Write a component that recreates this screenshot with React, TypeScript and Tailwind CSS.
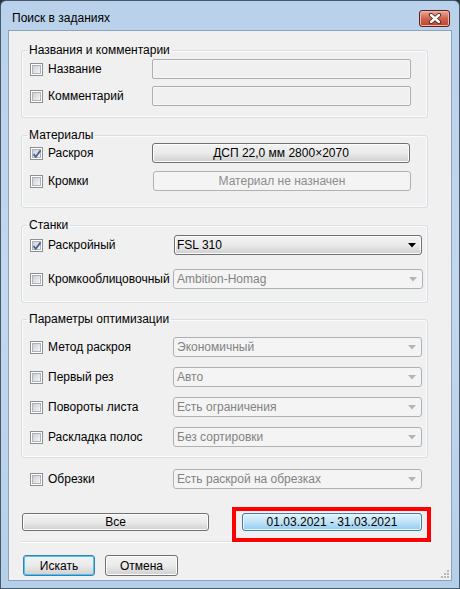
import React from 'react';

const font = { fontFamily: '"Liberation Sans", Arial, sans-serif' };

const CheckBox = ({ checked = false }: { checked?: boolean }) => (
    <div className="relative w-[13px] h-[13px] shrink-0 border border-[#8e8f8f] bg-white p-[1px]">
        <div className="w-full h-full border border-[#aeb3b9] bg-linear-to-br from-[#cbcfd5] to-[#f6f6f6]" />
        {checked && (
            <svg className="absolute left-[1px] top-[1px]" width="10" height="10" viewBox="0 0 10 10">
                <path d="M1.5 5.2 L3.8 7.8 L8.6 1.4" fill="none" stroke="#4a5f97" strokeWidth="1.8" strokeLinejoin="round" />
            </svg>
        )}
    </div>
);

const Label = ({ text, checked, width }: { text: string; checked?: boolean; width: string }) => (
    <div className={`flex items-center gap-[5px] shrink-0 ${width}`}>
        <CheckBox checked={checked} />
        <span className="text-[12px] leading-[14px] text-black">{text}</span>
    </div>
);

const TextBox = () => (
    <div className="w-[259px] h-[20px] rounded-[2px] border border-[#adadad] bg-[#f0f0f0] shadow-[inset_0_0_0_1px_#f7f7f7]" />
);

const Arrow = ({ color }: { color: string }) => (
    <svg width="8" height="5" viewBox="0 0 8 5" className="shrink-0">
        <path d="M0 0 H8 L4 4.5 Z" fill={color} />
    </svg>
);

const Combo = ({ text, enabled = false, w = 'w-[249px]' }: { text: string; enabled?: boolean; w?: string }) =>
    enabled ? (
        <div className={`${w} h-[20px] flex items-center justify-between pl-[2px] pr-[5px] rounded-[3px] border border-[#707070] bg-linear-to-b from-[#f2f2f2] via-[#ebebeb] to-[#cfcfcf] shadow-[inset_0_0_0_1px_#fcfcfc]`}>
            <span className="text-[12px] text-black">{text}</span>
            <Arrow color="#000" />
        </div>
    ) : (
        <div className={`${w} h-[20px] flex items-center justify-between pl-[3px] pr-[5px] rounded-[3px] border border-[#adb2b5] bg-[#f4f4f4]`}>
            <span className="text-[12px] text-[#838383]">{text}</span>
            <Arrow color="#b4b4b4" />
        </div>
    );

const Group = ({ title, className, children }: { title: string; className: string; children: React.ReactNode }) => (
    <fieldset className={`w-[407px] rounded-[3px] border border-[#d5dfe5] pl-[8px] shadow-[inset_0_0_0_1px_#fbfbfb] ${className}`}>
        <legend className="ml-[-3px] px-[2px] text-[12px] leading-[14px] text-black">{title}</legend>
        {children}
    </fieldset>
);

const CloseButton = () => (
    <div className="w-[31px] h-[17px] rounded-[3px] border border-[#5b2419] bg-linear-to-b from-[#e9a99b] via-[#d0634c] to-[#c23d25] shadow-[inset_0_0_0_1px_#eeb4a8] flex items-center justify-center">
        <svg width="14" height="11" viewBox="0 0 14 11">
            <path d="M3 2 L11 9 M11 2 L3 9" stroke="#51261d" strokeWidth="4.2" strokeLinecap="round" />
            <path d="M3 2 L11 9 M11 2 L3 9" stroke="#ffffff" strokeWidth="2.4" strokeLinecap="round" />
        </svg>
    </div>
);

export default function App() {
    return (
        <div className="w-[460px] h-[589px] bg-[#2a3340]" style={font}>
            <div className="w-full h-full rounded-t-[6px] border border-[#47596d] bg-linear-to-b from-[#b9d1ea] via-[#c3d8ee] to-[#b6cfe9] flex flex-col">
                {/* Title bar */}
                <div className="h-[29px] flex items-center justify-between pl-[11px] pr-[9px] pt-[5px]">
                    <span className="text-[12px] text-black">Поиск в заданиях</span>
                    <CloseButton />
                </div>

                {/* Client area */}
                <div className="relative mx-[7px] h-[551px] border border-[#8da3bd] bg-[#f0f0f0] flex flex-col pl-[12px]">
                    <Group title="Названия и комментарии" className="mt-[12px] pt-[2px] pb-[11px]">
                        <div className="flex flex-col gap-[7px]">
                            <div className="flex items-center h-[20px]">
                                <Label text="Название" width="w-[122px]" />
                                <TextBox />
                            </div>
                            <div className="flex items-center h-[20px]">
                                <Label text="Комментарий" width="w-[122px]" />
                                <TextBox />
                            </div>
                        </div>
                    </Group>

                    <Group title="Материалы" className="mt-[10px] pt-[1px] pb-[16px]">
                        <div className="flex flex-col gap-[8px]">
                            <div className="flex items-center h-[20px]">
                                <Label text="Раскроя" checked width="w-[122px]" />
                                <div className="w-[258px] h-[20px] flex items-center justify-center rounded-[3px] border border-[#707070] bg-linear-to-b from-[#f2f2f2] via-[#ebebeb] to-[#cfcfcf] shadow-[inset_0_0_0_1px_#fcfcfc] text-[12px] text-black">
                                    ДСП 22,0 мм 2800×2070
                                </div>
                            </div>
                            <div className="flex items-center h-[20px]">
                                <Label text="Кромки" width="w-[123px]" />
                                <div className="w-[258px] h-[20px] flex items-center justify-center rounded-[3px] border border-[#adb2b5] bg-[#f4f4f4] text-[12px] text-[#8d8d8d]">
                                    Материал не назначен
                                </div>
                            </div>
                        </div>
                    </Group>

                    <Group title="Станки" className="mt-[10px] pt-[3px] pb-[13px]">
                        <div className="flex flex-col gap-[14px]">
                            <div className="flex items-center h-[20px]">
                                <Label text="Раскройный" checked width="w-[144px]" />
                                <Combo text="FSL 310" enabled w="w-[248px]" />
                            </div>
                            <div className="flex items-center h-[20px]">
                                <Label text="Кромкооблицовочный" width="w-[143px]" />
                                <Combo text="Ambition-Homag" w="w-[250px]" />
                            </div>
                        </div>
                    </Group>

                    <Group title="Параметры оптимизации" className="mt-[9px] pt-[11px] pb-[10px]">
                        <div className="flex flex-col gap-[10px]">
                            {[
                                ['Метод раскроя', 'Экономичный'],
                                ['Первый рез', 'Авто'],
                                ['Повороты листа', 'Есть ограничения'],
                                ['Раскладка полос', 'Без сортировки'],
                            ].map(([l, v]) => (
                                <div key={l} className="flex items-center h-[20px]">
                                    <Label text={l} width="w-[143px]" />
                                    <Combo text={v} />
                                </div>
                            ))}
                        </div>
                    </Group>

                    <div className="mt-[11px] pl-[9px] flex items-center h-[20px]">
                        <Label text="Обрезки" width="w-[143px]" />
                        <Combo text="Есть раскрой на обрезках" />
                    </div>

                    {/* Date filter */}
                    <div className="mt-[24px] flex items-center h-[18px] pl-[1px]">
                        <div className="w-[187px] h-[18px] flex items-center justify-center rounded-[3px] border border-[#707070] bg-linear-to-b from-[#f2f2f2] via-[#ebebeb] to-[#cfcfcf] shadow-[inset_0_0_0_1px_#fcfcfc] text-[12px] text-black">
                            Все
                        </div>
                        <div className="ml-[33px] w-[180px] h-[18px] flex items-center justify-center rounded-[3px] border border-[#3c7fb1] bg-linear-to-b from-[#e3f4fc] via-[#bfe3f8] to-[#92cbee] shadow-[inset_0_0_0_1px_#e8f6fd] text-[12px] text-black">
                            01.03.2021 - 31.03.2021
                        </div>
                    </div>
                    <div className="absolute left-[223px] top-[476px] w-[199px] h-[35px] border-[4px] border-[#ff0000]" />

                    <div className="mt-[10px] w-[409px] h-[2px] border-t border-[#d5dfe5] border-b border-b-white" />

                    <div className="mt-[12px] flex items-center gap-[10px] pl-[2px]">
                        <div className="w-[72px] h-[21px] flex items-center justify-center rounded-[3px] border border-[#3c7fb1] bg-linear-to-b from-[#f2f2f2] via-[#ebebeb] to-[#cfcfcf] shadow-[inset_0_0_0_1px_#48c6f9] text-[12px] text-black">
                            Искать
                        </div>
                        <div className="w-[73px] h-[21px] flex items-center justify-center rounded-[3px] border border-[#707070] bg-linear-to-b from-[#f2f2f2] via-[#ebebeb] to-[#cfcfcf] shadow-[inset_0_0_0_1px_#fcfcfc] text-[12px] text-black">
                            Отмена
                        </div>
                    </div>

                    {/* resize grip */}
                    <svg className="absolute right-[1px] bottom-[1px]" width="11" height="11" viewBox="0 0 11 11">
                        {[[8, 0], [5, 3], [8, 3], [2, 6], [5, 6], [8, 6]].map(([x, y]) => (
                            <rect key={`${x}-${y}`} x={x} y={y + 2} width="2" height="2" fill="#b8b8b8" />
                        ))}
                    </svg>
                </div>
            </div>
        </div>
    );
}
